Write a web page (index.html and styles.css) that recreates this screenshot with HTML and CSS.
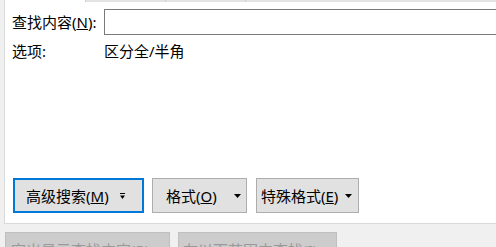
FILE: index.html
```html
<!DOCTYPE html>
<html lang="zh-CN">
<head>
    <meta charset="UTF-8">
    <title>查找</title>
    <link rel="stylesheet" href="styles.css">
</head>
<body>
    <div class="page">
        <!-- pestaña de buscar -->
        <div class="panel">
            <div class="tabs">
                <div class="tab tab-active"></div>
                <div class="tab"></div>
                <div class="tab"></div>
                <div class="tab tab-rest"></div>
            </div>

            <div class="field">
                <span class="label">查找内容(<u>N</u>):</span>
                <input type="text" class="input">
            </div>

            <div class="options">
                <span class="label">选项:</span>
                <span>区分全/半角</span>
            </div>

            <div class="actions">
                <button class="btn btn-more">高级搜索(<u>M</u>)
                    <svg class="caret" width="5" height="6" viewBox="0 0 5 6"><rect x="0" y="0" width="5" height="1" fill="#000"/><path d="M0 2.5H5L2.5 6Z" fill="#000"/></svg>
                </button>
                <button class="btn btn-format">格式(<u>O</u>)
                    <svg class="caret" width="7" height="4" viewBox="0 0 7 4"><path d="M0 0H7L3.5 4Z" fill="#000"/></svg>
                </button>
                <button class="btn btn-special">特殊格式(<u>E</u>)
                    <svg class="caret" width="7" height="4" viewBox="0 0 7 4"><path d="M0 0H7L3.5 4Z" fill="#000"/></svg>
                </button>
            </div>
        </div>

        <!-- botones de abajo (desactivados) -->
        <div class="footer">
            <button class="btn btn-off btn-highlight" disabled>突出显示查找内容(<u>R</u>)</button>
            <button class="btn btn-off btn-range" disabled>在以下范围中查找(<u>I</u>)</button>
        </div>
    </div>
</body>
</html>
```

FILE: styles.css
```css
body {
    margin: 0;
    height: 247px;
    overflow: hidden;
    background-color: #f0f0f0;
    color: #000;
    font-family: "Noto Sans", "Noto Sans CJK SC", sans-serif;
    font-size: 15px;
    line-height: 20px;
}
.page {
    padding-left: 4px;
}
.panel {
    height: 223px;
    background-color: #fff;
    border-left: 1px solid #d9d9d9;
    border-bottom: 1px solid #d9d9d9;
    display: flex;
    flex-direction: column;
    overflow: hidden;
}
.tabs {
    display: flex;
    height: 2px;
}
.tab {
    width: 79px;
    background-color: #e3e3e3;
    border-left: 1px solid #cfcfcf;
}
.tab-active {
    width: 80px;
    background-color: #fff;
    border-left: none;
}
.tab-rest {
    flex: 1;
}
.field {
    display: flex;
    align-items: center;
    margin-top: 7px;
    padding-left: 7px;
}
.label {
    width: 92px;
    flex-shrink: 0;
}
.input {
    flex: 1;
    height: 26px;
    box-sizing: border-box;
    margin: 0 -20px 0 0;
    border: 1px solid #7a7a7a;
    background-color: #fff;
}
.options {
    display: flex;
    margin-top: 6px;
    padding-left: 7px;
}
.actions {
    display: flex;
    margin-top: auto;
    margin-bottom: 10px;
    padding-left: 8px;
}
.btn {
    height: 35px;
    box-sizing: border-box;
    display: flex;
    align-items: center;
    padding: 0;
    border: 1px solid #adadad;
    background-color: #e1e1e1;
    color: #000;
    font: inherit;
    white-space: nowrap;
}
.caret {
    margin-left: auto;
}
.btn-more {
    width: 131px;
    border: 2px solid #0078d7;
    padding-left: 11px;
    padding-right: 17px;
}
.btn-format {
    width: 95px;
    margin-left: 8px;
    padding-left: 13px;
    padding-right: 5px;
}
.btn-special {
    width: 103px;
    margin-left: 9px;
    padding-left: 4px;
    padding-right: 6px;
}
.footer {
    display: flex;
    margin-top: 8px;
    padding-left: 1px;
}
.btn-off {
    border-color: #bfbfbf;
    background-color: #cccccc;
    color: #9a9a9a;
}
.btn-highlight {
    width: 165px;
    padding-left: 5px;
}
.btn-range {
    width: 159px;
    margin-left: 8px;
    padding-left: 4px;
}
```
